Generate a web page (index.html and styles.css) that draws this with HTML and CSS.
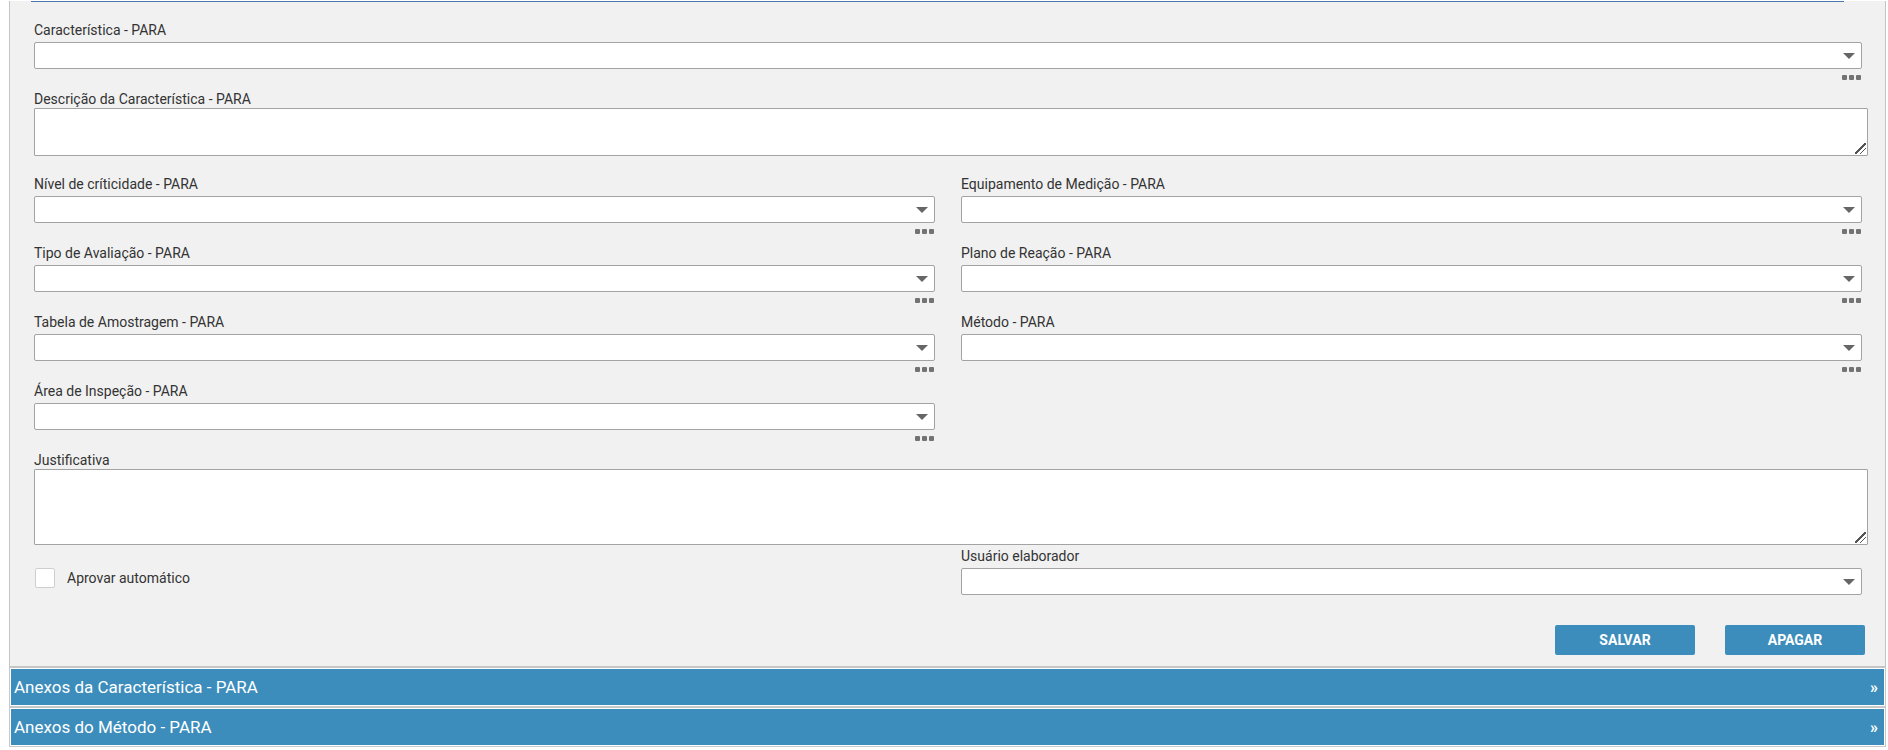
FILE: index.html
```html
<!DOCTYPE html>
<html lang="pt-BR">
<head>
<meta charset="utf-8">
<title>Característica - PARA</title>
<link rel="stylesheet" href="styles.css">
</head>
<body>
<div class="page">
  <section class="panel">
    <div class="rule"></div>
    <div class="form">
      <div class="field">
        <label class="lbl">Característica - PARA</label>
        <div class="select"><svg class="caret" viewBox="0 0 12 6" width="12" height="6"><path d="M0 0H12L6 6Z"/></svg></div>
        <div class="more"><i></i><i></i><i></i></div>
      </div>

      <div class="field memo">
        <label class="lbl">Descrição da Característica - PARA</label>
        <div class="area-wrap"><textarea class="area short"></textarea><span class="grip"></span></div>
      </div>

      <div class="cols">
        <div class="field">
          <label class="lbl">Nível de críticidade - PARA</label>
          <div class="select"><svg class="caret" viewBox="0 0 12 6" width="12" height="6"><path d="M0 0H12L6 6Z"/></svg></div>
          <div class="more"><i></i><i></i><i></i></div>
        </div>
        <div class="field">
          <label class="lbl">Equipamento de Medição - PARA</label>
          <div class="select"><svg class="caret" viewBox="0 0 12 6" width="12" height="6"><path d="M0 0H12L6 6Z"/></svg></div>
          <div class="more"><i></i><i></i><i></i></div>
        </div>
        <div class="field">
          <label class="lbl">Tipo de Avaliação - PARA</label>
          <div class="select"><svg class="caret" viewBox="0 0 12 6" width="12" height="6"><path d="M0 0H12L6 6Z"/></svg></div>
          <div class="more"><i></i><i></i><i></i></div>
        </div>
        <div class="field">
          <label class="lbl">Plano de Reação - PARA</label>
          <div class="select"><svg class="caret" viewBox="0 0 12 6" width="12" height="6"><path d="M0 0H12L6 6Z"/></svg></div>
          <div class="more"><i></i><i></i><i></i></div>
        </div>
        <div class="field">
          <label class="lbl">Tabela de Amostragem - PARA</label>
          <div class="select"><svg class="caret" viewBox="0 0 12 6" width="12" height="6"><path d="M0 0H12L6 6Z"/></svg></div>
          <div class="more"><i></i><i></i><i></i></div>
        </div>
        <div class="field">
          <label class="lbl">Método - PARA</label>
          <div class="select"><svg class="caret" viewBox="0 0 12 6" width="12" height="6"><path d="M0 0H12L6 6Z"/></svg></div>
          <div class="more"><i></i><i></i><i></i></div>
        </div>
        <div class="field">
          <label class="lbl">Área de Inspeção - PARA</label>
          <div class="select"><svg class="caret" viewBox="0 0 12 6" width="12" height="6"><path d="M0 0H12L6 6Z"/></svg></div>
          <div class="more"><i></i><i></i><i></i></div>
        </div>
        <div></div>
      </div>

      <div class="field memo">
        <label class="lbl">Justificativa</label>
        <div class="area-wrap"><textarea class="area tall"></textarea><span class="grip"></span></div>
      </div>

      <div class="cols foot">
        <label class="check"><span class="box"></span><span>Aprovar automático</span></label>
        <div class="field plain">
          <label class="lbl">Usuário elaborador</label>
          <div class="select"><svg class="caret" viewBox="0 0 12 6" width="12" height="6"><path d="M0 0H12L6 6Z"/></svg></div>
        </div>
      </div>

      <div class="actions">
        <button class="btn" type="button">SALVAR</button>
        <button class="btn" type="button">APAGAR</button>
      </div>
    </div>
  </section>

  <div class="bar"><div class="bar-in"><span>Anexos da Característica - PARA</span><span class="chev">»</span></div></div>
  <div class="bar"><div class="bar-in"><span>Anexos do Método - PARA</span><span class="chev">»</span></div></div>
</div>
</body>
</html>
```

FILE: styles.css
```css
* {
  box-sizing: border-box;
}

html, body {
  margin: 0;
  padding: 0;
  background: #ffffff;
}

body {
  font-family: Roboto, "Liberation Sans", Arial, sans-serif;
  font-size: 14px;
  color: #333333;
}

.page {
  margin: 0 2px 0 9px;
}

/* grey form panel */
.panel {
  background: #f1f1f1;
  border: 1px solid #c4c4c4;
  border-top: none;
}

.rule {
  height: 1px;
  margin: 1px 41px 0 21px;
  background: #4a76b0;
}

.form {
  padding: 20px 23px 11px 24px;
}

.field {
  display: flex;
  flex-direction: column;
  margin-bottom: 11px;
}

.lbl {
  display: block;
  height: 16px;
  line-height: 16px;
  margin-bottom: 4px;
  font-size: 14px;
  color: #333333;
  white-space: nowrap;
}

.memo {
  margin-bottom: 20px;
}

.memo .lbl {
  margin-bottom: 1px;
}

.select {
  position: relative;
  height: 27px;
  background: #ffffff;
  border: 1px solid #a3a3a3;
  border-radius: 2px;
}

.caret {
  position: absolute;
  right: 6px;
  top: 10px;
  fill: #666666;
}

/* three-dot lookup handle under each combo */
.more {
  display: flex;
  justify-content: flex-end;
  gap: 2px;
  margin-top: 6px;
  padding-right: 1px;
  height: 5px;
}

.more i {
  display: block;
  width: 5px;
  height: 5px;
  border-radius: 1px;
  background: #737373;
}

.area-wrap {
  position: relative;
  width: calc(100% + 6px);
}

.area {
  display: block;
  width: 100%;
  margin: 0;
  padding: 4px;
  border: 1px solid #a3a3a3;
  border-radius: 1px;
  background: #ffffff;
  font-family: inherit;
  font-size: 14px;
  resize: none;
}

/* resize grip drawn over the textarea corner */
.grip {
  position: absolute;
  right: 2px;
  bottom: 2px;
  width: 11px;
  height: 11px;
  pointer-events: none;
  background:
    linear-gradient(135deg, transparent 0 44%, #555 44% 56%, transparent 56%) 0 0 / 11px 11px no-repeat,
    linear-gradient(135deg, transparent 0 44%, #555 44% 56%, transparent 56%) 5px 5px / 6px 6px no-repeat;
}

.area.short {
  height: 48px;
}

.area.tall {
  height: 76px;
}

.cols {
  display: grid;
  grid-template-columns: 1fr 1fr;
  column-gap: 26px;
}

.foot {
  margin-top: -17px;
}

.plain {
  margin-bottom: 0;
}

.check {
  display: flex;
  align-items: center;
  gap: 12px;
  margin-top: 20px;
  padding-left: 1px;
  height: 20px;
  font-size: 14px;
  color: #333333;
}

.box {
  display: block;
  width: 20px;
  height: 20px;
  background: #ffffff;
  border: 1px solid #cfcfcf;
  border-radius: 2px;
}

.actions {
  display: flex;
  justify-content: flex-end;
  gap: 30px;
  margin: 30px -3px 0 0;
}

.btn {
  width: 140px;
  height: 30px;
  padding: 0;
  border: none;
  border-radius: 2px;
  background: #3c8dbc;
  color: #ffffff;
  font-family: inherit;
  font-size: 14px;
  font-weight: 700;
  line-height: 30px;
}

/* collapsible section headers */
.bar {
  border: 1px solid #c8c8c8;
  padding: 1px;
  background: #ffffff;
}

.bar-in {
  display: flex;
  align-items: center;
  justify-content: space-between;
  height: 36px;
  padding: 0 6px 0 3px;
  background: #3c8dbc;
  color: #ffffff;
  font-size: 17px;
}

.chev {
  font-size: 16px;
  font-weight: 700;
}
```
